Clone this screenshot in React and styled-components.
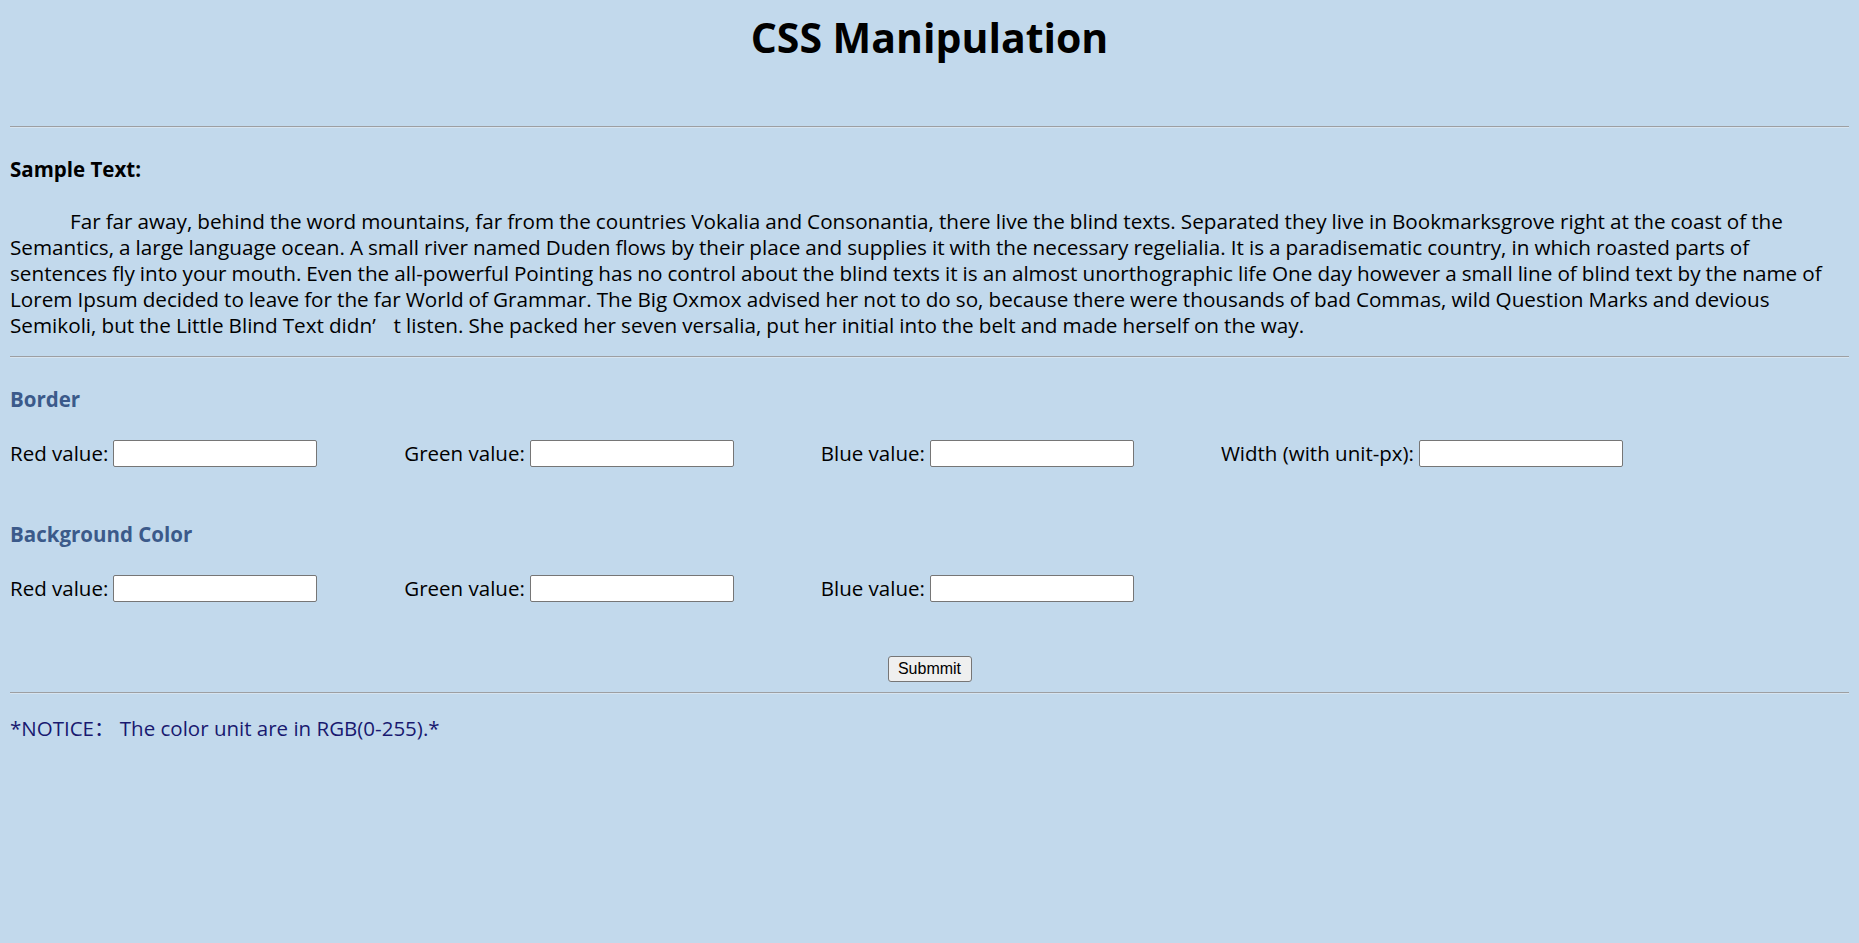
import React from 'react';
import styled, { createGlobalStyle } from 'styled-components';

const GlobalStyle = createGlobalStyle`
    html, body {
        background: #c2d9ec;
    }
    body {
        margin: 0 10px;
        font-family: "Open Sans", "Noto Sans CJK SC", sans-serif;
        font-size: 20.5px;
        line-height: 26px;
        color: #000;
    }
`;

const Title = styled.h1`
    margin: 11px 0 0;
    font-size: 41px;
    line-height: 53px;
    font-weight: 700;
    text-align: center;
`;

const Rule = styled.hr`
    margin: ${props => props.$top}px 0 0;
    border: none;
    border-top: 1px solid #9d9fa2;
    border-bottom: 1px solid #d6e4f0;
    height: 0;
`;

const Label = styled.h4`
    margin: ${props => props.$top}px 0 0;
    font-size: 20.5px;
    font-weight: 700;
    color: ${props => props.$color || '#000'};
`;

const Paragraph = styled.p`
    margin: 26px 0 0;
    text-indent: 60px;
    font-size: 20.7px;
    word-spacing: -0.35px;
`;

// the quote is a full-width glyph in the original page
const WideQuote = styled.span`
    margin-right: 0.62em;
`;

const Row = styled.div`
    display: flex;
    align-items: center;
    gap: 87px;
    margin-top: ${props => props.$top}px;
    height: 28px;
`;

const Field = styled.label`
    display: flex;
    align-items: center;
    gap: 5px;
    white-space: nowrap;
`;

const Input = styled.input`
    box-sizing: border-box;
    width: 204px;
    height: 27px;
    padding: 1px 3px;
    border: 1px solid #767676;
    border-radius: 2px;
    background: #fff;
    font-size: 16px;
`;

const ButtonBar = styled.div`
    display: flex;
    justify-content: center;
    margin-top: 54px;
`;

const Button = styled.button`
    box-sizing: border-box;
    width: 84px;
    height: 26px;
    padding: 0;
    border: 1px solid #767676;
    border-radius: 3px;
    background: #efefef;
    font-family: "Liberation Sans", Arial, sans-serif;
    font-size: 16px;
    color: #000;
`;

const Notice = styled.p`
    margin: 21px 0 0;
    color: #191970;
`;

const borderFields = ['Red value:', 'Green value:', 'Blue value:', 'Width (with unit-px):'];
const backgroundFields = ['Red value:', 'Green value:', 'Blue value:'];

function App() {
    return (
        <React.Fragment>
            <GlobalStyle />
            <Title>CSS Manipulation</Title>
            <Rule $top={62} />
            <Label $top={28}>Sample Text:</Label>
            <Paragraph>
                Far far away, behind the word mountains, far from the countries Vokalia and Consonantia, there live the blind texts. Separated they live in Bookmarksgrove right at the coast of the Semantics, a large language ocean. A small river named Duden flows by their place and supplies it with the necessary regelialia. It is a paradisematic country, in which roasted parts of sentences fly into your mouth. Even the all-powerful Pointing has no control about the blind texts it is an almost unorthographic life One day however a small line of blind text by the name of Lorem Ipsum decided to leave for the far World of Grammar. The Big Oxmox advised her not to do so, because there were thousands of bad Commas, wild Question Marks and devious Semikoli, but the Little Blind Text didn<WideQuote>’</WideQuote> t listen. She packed her seven versalia, put her initial into the belt and made herself on the way.
            </Paragraph>
            <Rule $top={18} />
            <Label $top={28} $color="#3b5a8a">Border</Label>
            <Row $top={27}>
                {borderFields.map((name, index) =>
                    <Field key={index}>{name}<Input type="text" /></Field>
                )}
            </Row>
            <Label $top={54} $color="#3b5a8a">Background Color</Label>
            <Row $top={27}>
                {backgroundFields.map((name, index) =>
                    <Field key={index}>{name}<Input type="text" /></Field>
                )}
            </Row>
            <ButtonBar>
                <Button type="button">Submmit</Button>
            </ButtonBar>
            <Rule $top={10} />
            <Notice>*NOTICE： The color unit are in RGB(0-255).*</Notice>
        </React.Fragment>
    );
}

export default App;
